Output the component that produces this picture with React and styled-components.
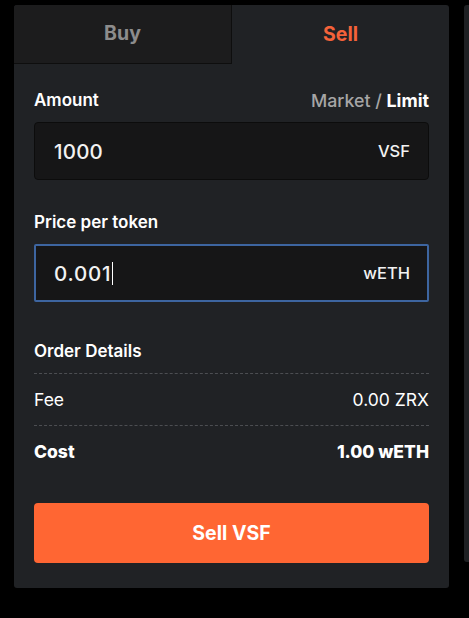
import React from "react";
import styled, { createGlobalStyle } from "styled-components";

const GlobalStyle = createGlobalStyle`
  html, body {
    margin: 0;
    padding: 0;
    background: #000;
    font-family: Inter, "Noto Sans", sans-serif;
  }
`;

const Page = styled.div`
  display: flex;
  align-items: flex-start;
  gap: 15px;
  padding: 5px 0 0 14px;
  height: 613px;
  overflow: hidden;
`;

const Card = styled.div`
  flex-shrink: 0;
  width: 435px;
  height: 583px;
  background: #202225;
  border-radius: 3px;
  overflow: hidden;
  display: flex;
  flex-direction: column;
`;

const SidePanel = styled.div`
  flex-shrink: 0;
  width: 10px;
  height: 557px;
  background: #1e2023;
  border-radius: 3px;
`;

const Tabs = styled.div`
  display: grid;
  grid-template-columns: 218px 1fr;
  height: 59px;
`;

const Tab = styled.div`
  display: flex;
  align-items: center;
  justify-content: center;
  font-size: 19.5px;
  font-weight: 700;
  color: ${(p) => (p.active ? "#f4623a" : "#8c8c8c")};
  background: ${(p) => (p.active ? "transparent" : "#1c1c1d")};
  border-right: ${(p) => (p.active ? "none" : "1px solid #0e0e0e")};
  border-bottom: ${(p) => (p.active ? "none" : "1px solid #0e0e0e")};
  padding-bottom: 2px;
`;

const Body = styled.div`
  padding: 26px 20px 0 20px;
  display: flex;
  flex-direction: column;
`;

const LabelRow = styled.div`
  display: flex;
  justify-content: space-between;
  align-items: center;
  height: 20px;
  margin-bottom: 12px;
`;

const Label = styled.div`
  font-size: 17px;
  font-weight: 600;
  color: #fff;
`;

const Mode = styled.div`
  font-size: 17.8px;
  font-weight: 500;
  color: #a6a6a6;

  b {
    color: #fff;
    font-weight: 700;
  }
`;

const Field = styled.div`
  display: flex;
  align-items: center;
  justify-content: space-between;
  height: 58px;
  box-sizing: border-box;
  background: #161617;
  border: ${(p) => (p.focused ? "2px solid #3d65a0" : "1px solid #0c0c0c")};
  border-radius: ${(p) => (p.focused ? "2px" : "4px")};
  padding: ${(p) => (p.focused ? "0 17px 0 18px" : "0 18px 0 19px")};
  margin-bottom: ${(p) => p.gap}px;
`;

const Value = styled.div`
  font-size: 20.5px;
  font-weight: 500;
  color: #f2f2f2;
  letter-spacing: ${(p) => (p.wide ? "0.8px" : "0.2px")};
  display: flex;
  align-items: center;
`;

const Caret = styled.span`
  display: inline-block;
  width: 1px;
  height: 23px;
  background: #fff;
  margin-left: 1px;
`;

const Unit = styled.div`
  font-size: 16.5px;
  font-weight: 500;
  color: #f2f2f2;
`;

const Section = styled.div`
  font-size: 17px;
  font-weight: 600;
  color: #fff;
  height: 20px;
  line-height: 20px;
  margin-bottom: 12px;
`;

const Row = styled.div`
  display: flex;
  justify-content: space-between;
  align-items: center;
  height: 51px;
  border-top: ${(p) => (p.dashed ? "1px dashed #4c4e52" : "none")};
  font-size: 17.5px;
  font-weight: ${(p) => (p.bold ? 800 : 400)};
  color: #fff;
`;

const Button = styled.button`
  margin-top: 26px;
  height: 60px;
  border: none;
  border-radius: 4px;
  background: #ff6633;
  color: #fff;
  font-family: inherit;
  font-size: 19.5px;
  font-weight: 700;
  cursor: pointer;
`;

export default function App() {
  return (
    <>
      <GlobalStyle />
      <Page>
        <Card>
          <Tabs>
            <Tab>Buy</Tab>
            <Tab active>Sell</Tab>
          </Tabs>
          <Body>
            <LabelRow>
              <Label>Amount</Label>
              <Mode>
                Market / <b>Limit</b>
              </Mode>
            </LabelRow>
            <Field gap={32}>
              <Value>1000</Value>
              <Unit>VSF</Unit>
            </Field>
            <LabelRow>
              <Label>Price per token</Label>
            </LabelRow>
            <Field focused gap={39}>
              <Value wide>
                0.001
                <Caret />
              </Value>
              <Unit>wETH</Unit>
            </Field>
            <Section>Order Details</Section>
            <Row dashed>
              <span>Fee</span>
              <span>0.00 ZRX</span>
            </Row>
            <Row dashed bold>
              <span>Cost</span>
              <span>1.00 wETH</span>
            </Row>
            <Button>Sell VSF</Button>
          </Body>
        </Card>
        <SidePanel />
      </Page>
    </>
  );
}
